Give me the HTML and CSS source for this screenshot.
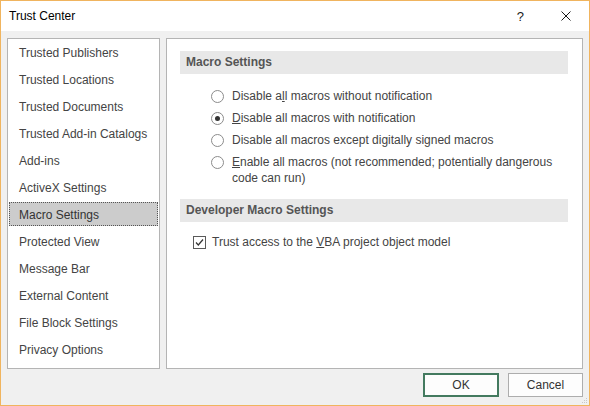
FILE: index.html
```html
<!DOCTYPE html>
<html lang="en">
<head>
    <meta charset="UTF-8">
    <title>Trust Center</title>
    <link rel="stylesheet" href="styles.css">
</head>
<body>
    <div class="dialog">
        <header class="titlebar">
            <span class="title">Trust Center</span>
            <div class="title-controls">
                <span class="help">?</span>
                <svg class="close" width="10" height="10" viewBox="0 0 10 10">
                    <path d="M0.5 0.5 L9.5 9.5 M9.5 0.5 L0.5 9.5" stroke="#1a1a1a" stroke-width="1" fill="none"/>
                </svg>
            </div>
        </header>

        <div class="dialog-body">
            <div class="panes">
                <ul class="nav-list">
                    <li class="nav-item">Trusted Publishers</li>
                    <li class="nav-item">Trusted Locations</li>
                    <li class="nav-item">Trusted Documents</li>
                    <li class="nav-item">Trusted Add-in Catalogs</li>
                    <li class="nav-item">Add-ins</li>
                    <li class="nav-item">ActiveX Settings</li>
                    <li class="nav-item selected">Macro Settings</li>
                    <li class="nav-item">Protected View</li>
                    <li class="nav-item">Message Bar</li>
                    <li class="nav-item">External Content</li>
                    <li class="nav-item">File Block Settings</li>
                    <li class="nav-item">Privacy Options</li>
                </ul>

                <section class="settings">
                    <h2 class="section-title">Macro Settings</h2>
                    <div class="options">
                        <label class="option">
                            <span class="radio"></span>
                            <span class="option-text">Disable a<u>l</u>l macros without notification</span>
                        </label>
                        <label class="option">
                            <span class="radio checked"></span>
                            <span class="option-text"><u>D</u>isable all macros with notification</span>
                        </label>
                        <label class="option">
                            <span class="radio"></span>
                            <span class="option-text">Disable all macros except digitally signed macros</span>
                        </label>
                        <label class="option">
                            <span class="radio"></span>
                            <span class="option-text"><u>E</u>nable all macros (not recommended; potentially dangerous<br>code can run)</span>
                        </label>
                    </div>

                    <h2 class="section-title dev">Developer Macro Settings</h2>
                    <label class="check-row">
                        <span class="checkbox">
                            <svg width="11" height="11" viewBox="0 0 11 11">
                                <path d="M2 5.5 L4.3 8 L9 2.5" stroke="#333" stroke-width="1.2" fill="none"/>
                            </svg>
                        </span>
                        <span class="option-text">Trust access to the <u>V</u>BA project object model</span>
                    </label>
                </section>
            </div>

            <div class="buttons">
                <button class="btn btn-default">OK</button>
                <button class="btn">Cancel</button>
            </div>
        </div>

        <svg class="grip" width="6" height="6" viewBox="0 0 6 6">
            <rect x="4" y="0" width="1" height="1" fill="#c8c8c8"/>
            <rect x="2" y="2" width="1" height="1" fill="#c8c8c8"/>
            <rect x="4" y="2" width="1" height="1" fill="#c8c8c8"/>
            <rect x="0" y="4" width="1" height="1" fill="#c8c8c8"/>
            <rect x="2" y="4" width="1" height="1" fill="#c8c8c8"/>
            <rect x="4" y="4" width="1" height="1" fill="#c8c8c8"/>
        </svg>
    </div>
</body>
</html>
```
FILE: styles.css
```css
:root {
    --frame: #f0b45e;
    --face: #f0f0f0;
    --pane-border: #b4b4b4;
    --header-bg: #e8e8e8;
    --text: #444444;
    --font: 'Liberation Sans', Arial, sans-serif;
}

* {
    margin: 0;
    padding: 0;
    box-sizing: border-box;
}

body {
    font-family: var(--font);
    font-size: 12px;
    color: var(--text);
    background: #ffffff;
}

.dialog {
    position: relative;
    width: 590px;
    height: 406px;
    border: 1px solid var(--frame);
    display: flex;
    flex-direction: column;
    background: var(--face);
}

.titlebar {
    height: 30px;
    background: #ffffff;
    display: flex;
    align-items: center;
    justify-content: space-between;
    padding: 0 18px 0 8px;
}

.title {
    color: #000000;
    font-size: 12px;
}

.title-controls {
    display: flex;
    align-items: center;
    gap: 37px;
}

.help {
    color: #1a1a1a;
    font-size: 13px;
}

.close {
    display: block;
}

.dialog-body {
    flex: 1;
    padding: 7px 6px 0;
    display: flex;
    flex-direction: column;
}

.panes {
    display: flex;
    gap: 6px;
    height: 331px;
}

/* left category list */
.nav-list {
    list-style: none;
    width: 153px;
    background: #ffffff;
    border: 1px solid var(--pane-border);
    padding-top: 1px;
}

.nav-item {
    height: 24px;
    line-height: 24px;
    margin: 0 1px 3px;
    padding-left: 9px;
    border: 1px dotted transparent;
    white-space: nowrap;
}

.nav-item.selected {
    background: #cccccc;
    border-color: #555555;
    color: #333333;
}

/* right settings pane */
.settings {
    flex: 1;
    background: #ffffff;
    border: 1px solid var(--pane-border);
    padding: 12px 14px 0 13px;
}

.section-title {
    height: 23px;
    line-height: 23px;
    background: var(--header-bg);
    padding-left: 6px;
    font-size: 12px;
    font-weight: bold;
    color: #555555;
}

.section-title.dev {
    margin-top: 10px;
}

.options {
    margin-top: 11px;
    padding-left: 31px;
}

.option {
    display: flex;
    align-items: flex-start;
    gap: 8px;
    padding: 3px 0;
    line-height: 16px;
}

.radio {
    flex: none;
    width: 13px;
    height: 13px;
    margin-top: 2px;
    border: 1px solid #8c8c8c;
    border-radius: 50%;
    background: #ffffff;
    display: flex;
    align-items: center;
    justify-content: center;
}

.radio.checked::after {
    content: "";
    width: 5px;
    height: 5px;
    border-radius: 50%;
    background: #333333;
}

.check-row {
    display: flex;
    align-items: center;
    gap: 6px;
    margin-top: 9px;
    padding-left: 13px;
    height: 22px;
}

.checkbox {
    flex: none;
    width: 13px;
    height: 13px;
    border: 1px solid #5a5a5a;
    background: #ffffff;
    display: flex;
    align-items: center;
    justify-content: center;
}

.checkbox svg {
    display: block;
}

/* dialog buttons */
.buttons {
    display: flex;
    justify-content: flex-end;
    gap: 9px;
    margin-top: 4px;
}

.btn {
    width: 75px;
    height: 24px;
    font-family: var(--font);
    font-size: 12px;
    color: #333333;
    background: #fdfdfd;
    border: 1px solid #adadad;
}

.btn-default {
    width: 76px;
    border: 2px solid #437a5f;
}

.grip {
    position: absolute;
    right: 1px;
    bottom: 1px;
}
```
